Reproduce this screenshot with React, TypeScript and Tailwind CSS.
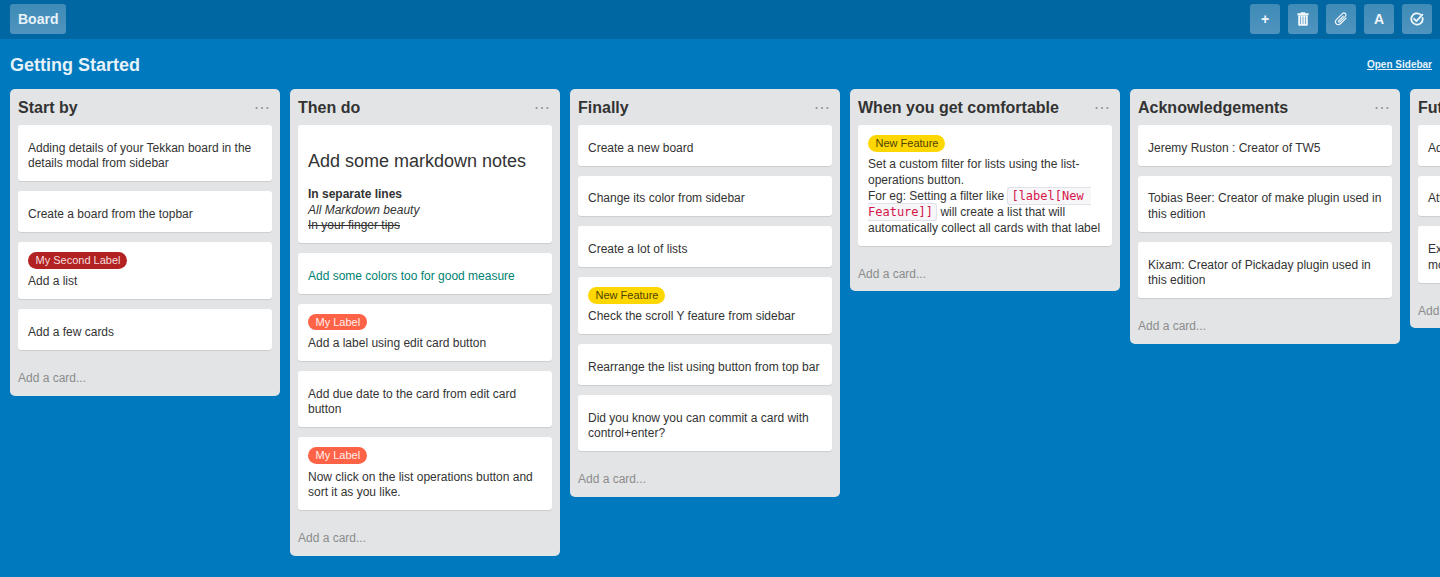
import React from "react";

type Tone = "firebrick" | "tomato" | "gold";

const tones: Record<Tone, string> = {
  firebrick: "bg-[#b22222] text-[#f5dede]",
  tomato: "bg-[#ff6347] text-[#fff0ec]",
  gold: "bg-[#ffd700] text-[#4d4200]",
};

interface CardData {
  label?: string;
  tone?: Tone;
  body: React.ReactNode;
}

interface ListData {
  title: string;
  cards: CardData[];
}

const lists: ListData[] = [
  {
    title: "Start by",
    cards: [
      { body: "Adding details of your Tekkan board in the details modal from sidebar" },
      { body: "Create a board from the topbar" },
      { label: "My Second Label", tone: "firebrick", body: "Add a list" },
      { body: "Add a few cards" },
    ],
  },
  {
    title: "Then do",
    cards: [
      {
        body: (
          <>
            <h2 className="mt-[9.3px] mb-[13.6px] text-[18px] leading-[23.4px]">Add some markdown notes</h2>
            <strong className="block">In separate lines</strong>
            <em className="block">All Markdown beauty</em>
            <s className="block">In your finger tips</s>
          </>
        ),
      },
      { body: <span className="text-[#008272]">Add some colors too for good measure</span> },
      { label: "My Label", tone: "tomato", body: "Add a label using edit card button" },
      { body: "Add due date to the card from edit card button" },
      { label: "My Label", tone: "tomato", body: "Now click on the list operations button and sort it as you like." },
    ],
  },
  {
    title: "Finally",
    cards: [
      { body: "Create a new board" },
      { body: "Change its color from sidebar" },
      { body: "Create a lot of lists" },
      { label: "New Feature", tone: "gold", body: "Check the scroll Y feature from sidebar" },
      { body: "Rearrange the list using button from top bar" },
      { body: "Did you know you can commit a card with control+enter?" },
    ],
  },
  {
    title: "When you get comfortable",
    cards: [
      {
        label: "New Feature",
        tone: "gold",
        body: (
          <p className="-mt-[1.2px] mb-[0.2px] leading-4">
            Set a custom filter for lists using the list-operations button.
            <br />
            For eg: Setting a filter like{" "}
            <code className="rounded-[3px] border border-[#e1e1e8] bg-[#f7f7f9] px-[3px] py-px font-['DejaVu_Sans_Mono',monospace] text-[12px] leading-[15px] whitespace-pre-wrap text-[#d6144a]">
              [label[New Feature]]
            </code>{" "}
            will create a list that will automatically collect all cards with that label
          </p>
        ),
      },
    ],
  },
  {
    title: "Acknowledgements",
    cards: [
      { body: "Jeremy Ruston : Creator of TW5" },
      { body: "Tobias Beer: Creator of make plugin used in this edition" },
      { body: "Kixam: Creator of Pickaday plugin used in this edition" },
    ],
  },
  {
    title: "Future Plans",
    cards: [
      { body: "Add more filters" },
      { body: "Attachments" },
      {
        body: (
          <>
            Export the board and its lists to
            <br />
            more formats
          </>
        ),
      },
    ],
  },
];

function TrashIcon() {
  return (
    <svg viewBox="0 0 12 14" className="h-[14px] w-3" fill="currentColor">
      <path
        fillRule="evenodd"
        d="M4 0.3h4l.6 1H11.6v2H.4V1.3h3zM1.2 3.5h9.6v9.2c0 .6-.4 1-1 1H2.2c-.6 0-1-.4-1-1zM3.3 4.5v7.6h.7V4.5zM5.65 4.5v7.6h.7V4.5zM8 4.5v7.6h.7V4.5z"
      />
    </svg>
  );
}

function ClipIcon() {
  return (
    <svg viewBox="0 0 14 14" className="size-[14px]" fill="none" stroke="currentColor" strokeWidth="1.2" strokeLinecap="round" strokeLinejoin="round">
      <path d="M9.2 4.2 4.8 8.6c-.9.9.2 2.1 1.1 1.2l5.2-5.2c2.2-2.3-.7-4.9-2.9-2.8L2.6 7.4c-3.1 3.1.9 7.3 4.1 4.1l5.4-5.4" />
    </svg>
  );
}

function CheckIcon() {
  return (
    <svg viewBox="0 0 14 14" className="size-[14px]" fill="none" stroke="currentColor" strokeWidth="1.8" strokeLinecap="round" strokeLinejoin="round">
      <path d="M10.6 2.6A5.7 5.7 0 1 0 12.6 6" />
      <path d="M4.1 6.8 6.4 9.1 12.4 2.6" />
    </svg>
  );
}

function TopButton({ children }: { children: React.ReactNode }) {
  return (
    <button className="flex size-[30px] items-center justify-center rounded-[3px] bg-linear-to-b from-[#3f8bb8] to-[#4e94be] text-[14px] font-bold text-[#f0f6fa]">
      {children}
    </button>
  );
}

function Card({ label, tone, body }: CardData) {
  return (
    <article className="rounded-[3px] bg-white px-2.5 pt-2.5 pb-[9.4px] text-[12px] leading-[15.6px] shadow-[0_1px_1px_rgba(0,0,0,0.1)]">
      {label && tone ? (
        <div className="mb-[5.7px] flex">
          <span className={`h-[16.6px] rounded-full pr-[6.9px] pl-[7.5px] text-[11px] leading-[16.6px] ${tones[tone]}`}>{label}</span>
        </div>
      ) : (
        <div className="h-[5.7px]" />
      )}
      {body}
    </article>
  );
}

function List({ title, cards }: ListData) {
  return (
    <section className="w-[270px] shrink-0 rounded-[5px] bg-[#e2e4e6] px-2">
      <header className="flex h-9 items-center justify-between">
        <h2 className="pt-[2px] text-[16px] leading-5 font-bold">{title}</h2>
        <svg viewBox="0 0 14 4" className="mt-[2px] mr-[3px] h-1 w-[14px]" fill="#949494">
          <circle cx="1.6" cy="2" r="1.1" />
          <circle cx="7" cy="2" r="1.1" />
          <circle cx="12.4" cy="2" r="1.1" />
        </svg>
      </header>
      <div className="flex flex-col gap-2.5">
        {cards.map((card, i) => (
          <Card key={i} {...card} />
        ))}
      </div>
      <div className="pt-5 pb-[9.8px] text-[12px] leading-4 text-[#8c8c8c]">Add a card...</div>
    </section>
  );
}

export default function App() {
  return (
    <div className="h-[577px] w-[1440px] overflow-hidden bg-[#0079bf] font-['Liberation_Sans',Arial,sans-serif] text-[#333]">
      <nav className="flex h-[39px] items-start justify-between bg-[#0067a3] pt-1 pr-2 pl-2.5">
        <button className="h-[30px] rounded-[3px] bg-linear-to-b from-[#3f8bb8] to-[#4e94be] px-2 text-[14px] font-bold text-[#e8f3f9]">
          Board
        </button>
        <div className="flex gap-2">
          <TopButton>+</TopButton>
          <TopButton>
            <TrashIcon />
          </TopButton>
          <TopButton>
            <ClipIcon />
          </TopButton>
          <TopButton>A</TopButton>
          <TopButton>
            <CheckIcon />
          </TopButton>
        </div>
      </nav>
      <div className="flex h-[50px] items-center justify-between pr-2 pl-2.5 text-[#e5f2f9]">
        <h1 className="pt-[2px] text-[18px] font-bold">Getting Started</h1>
        <a className="text-[10px] font-bold underline">Open Sidebar</a>
      </div>
      <main className="flex items-start gap-2.5 pl-2.5">
        {lists.map((list) => (
          <List key={list.title} {...list} />
        ))}
      </main>
    </div>
  );
}
